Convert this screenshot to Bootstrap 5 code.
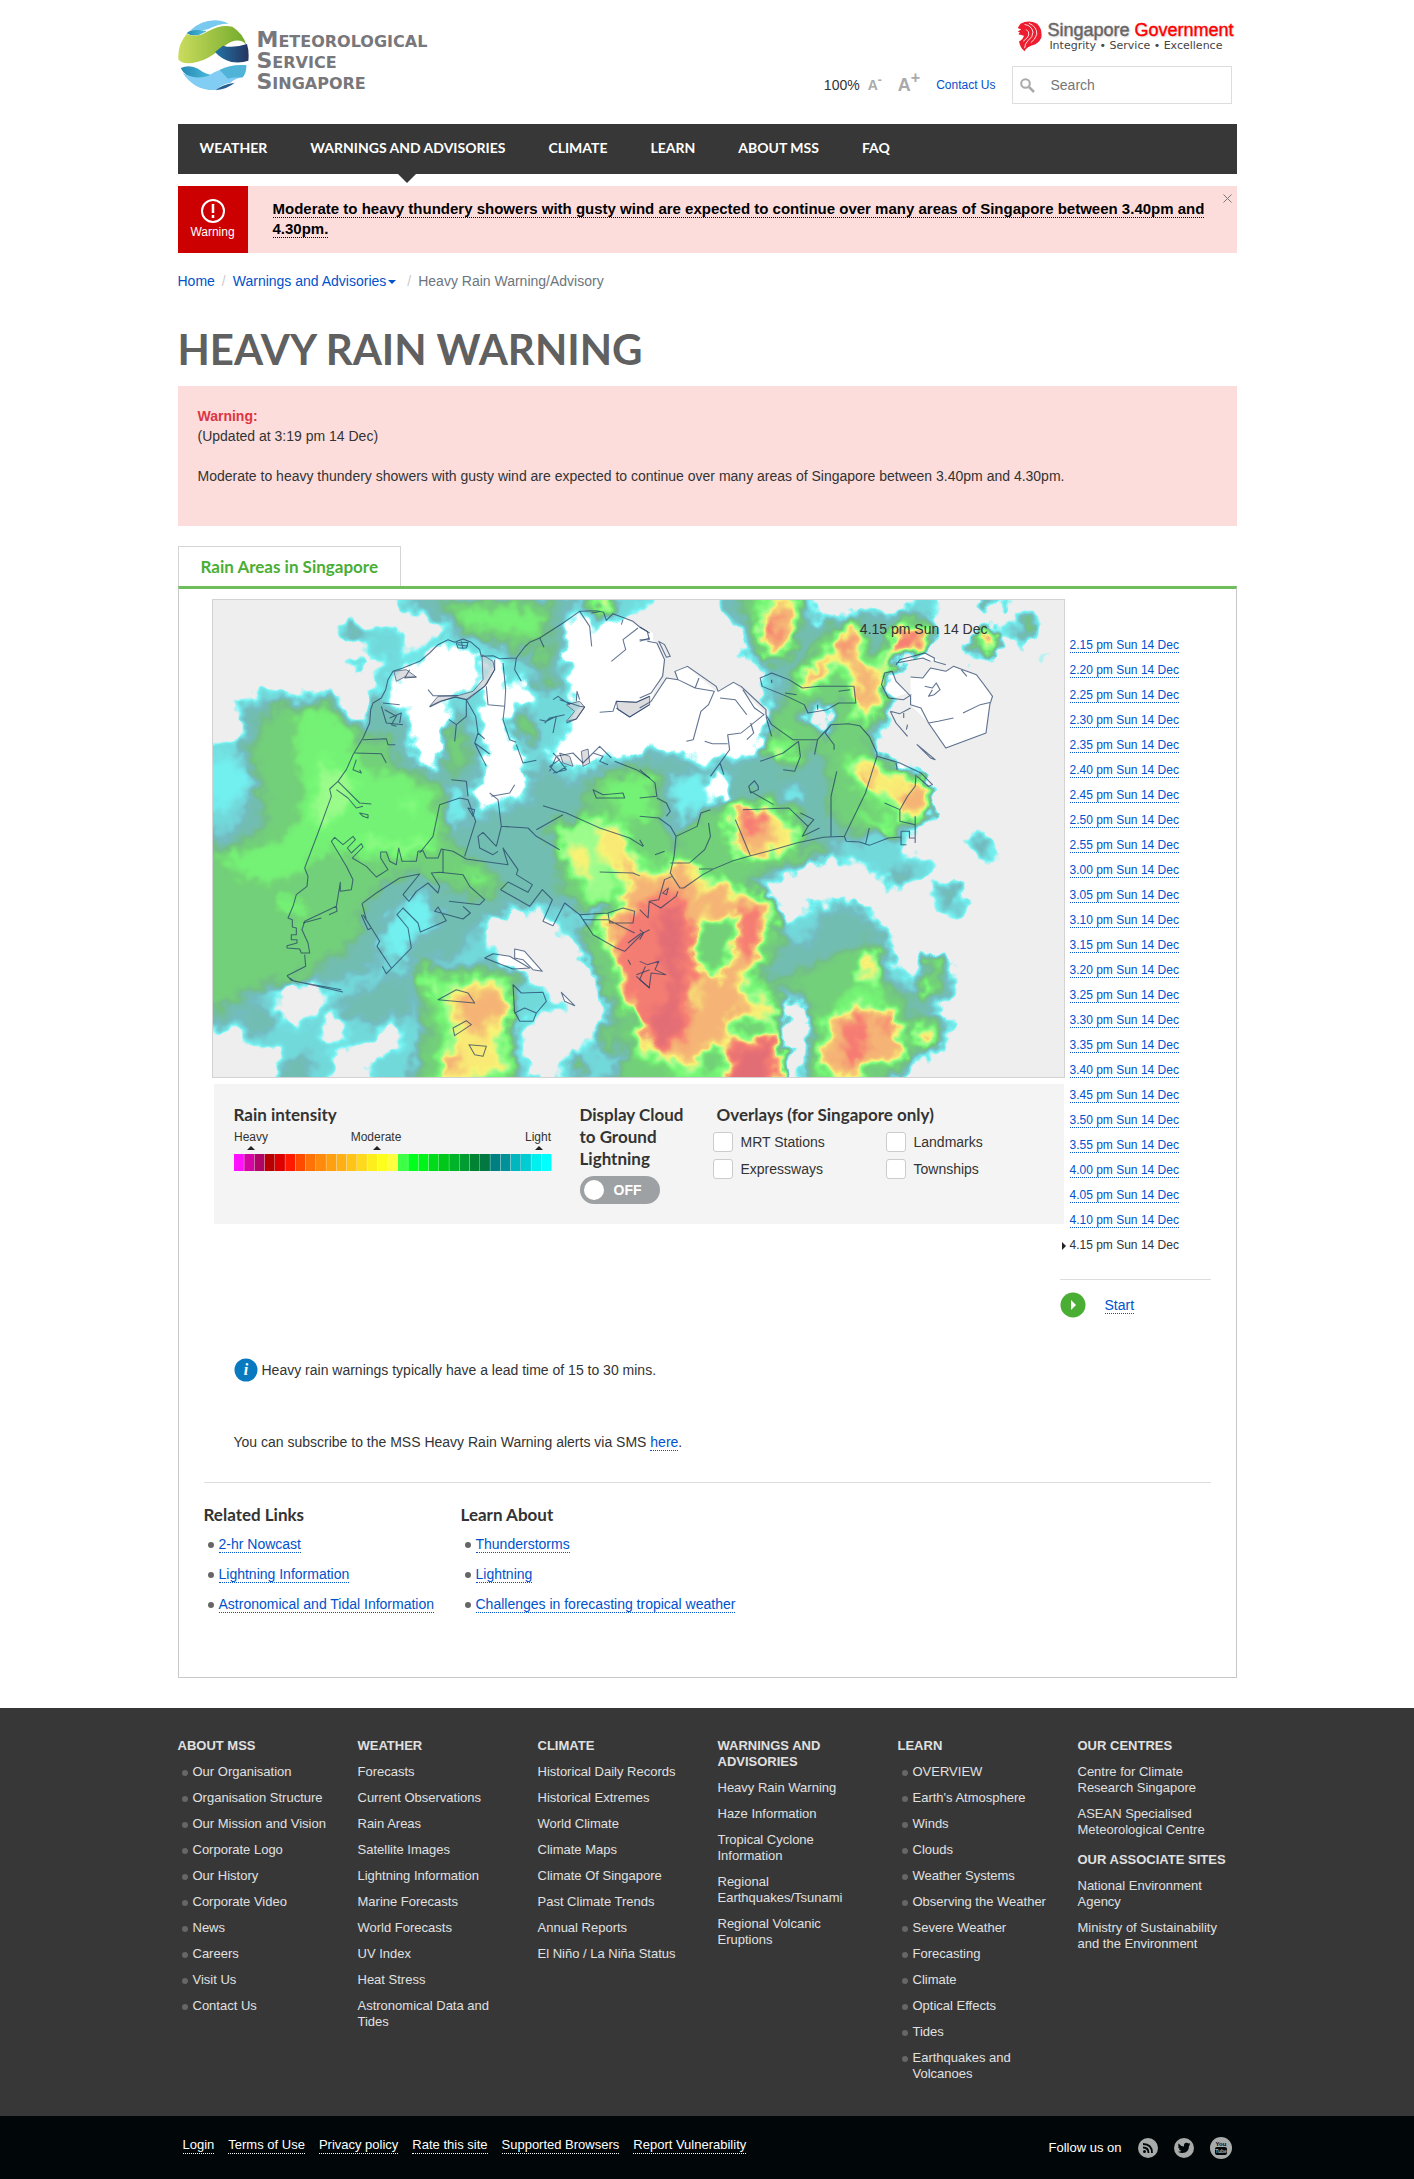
<!DOCTYPE html>
<html lang="en">
<head>
<meta charset="utf-8">
<meta name="viewport" content="width=device-width, initial-scale=1">
<title>Heavy Rain Warning | Meteorological Service Singapore</title>
<link href="https://cdn.jsdelivr.net/npm/bootstrap@5.3.0/dist/css/bootstrap.min.css" rel="stylesheet">
<style>
body{font-family:"Liberation Sans",Arial,sans-serif;font-size:14px;line-height:20px;color:#333;background:#fff}
a{color:#0052cc;text-decoration:none}
.page-wrap{max-width:1059px;margin:0 auto}
.head-font{font-family:Lato,sans-serif;font-weight:700}
.dotted{border-bottom:1px dotted currentColor}
.mast{height:124px}
.brand{margin-top:20px;gap:8px}
.brand-name{font:bold 16px/19px "DejaVu Sans",sans-serif;color:#77777c;padding-top:10px}
.brand-name b{font-size:22px;line-height:19px}
.gov{margin:20px 3px 0 0;gap:5px}
.gov-name{font-size:18px;line-height:20px;color:#666;-webkit-text-stroke:.4px;text-shadow:1px 1px 2px #ccc}
.gov-name span{color:#f00}
.gov-motto{font:11px/12px "DejaVu Sans",sans-serif;color:#444;padding-left:2px}
.tools{margin:14px 5px 0 0}
.contact{font-size:12px}
.size-btn{border:0;background:none;padding:0;color:#aaa;font-weight:700}
.size-s{font-size:14px}.size-l{font-size:18px}
.size-s sup{font-size:12px}.size-l sup{font-size:16px}
.search-box{width:220px;height:38px;border:1px solid #ddd;padding-left:7px}
.search-box input{border:0;outline:0;width:150px;margin-left:16px;padding:0;color:#333;background:none}
.search-box input::placeholder{color:#757575;opacity:1}
.main-nav{background:#373737;height:50px}
.main-nav .nav-link{color:#fff;font-size:14px;line-height:20px;padding:14px 21px 16px 22px;position:relative}
.main-nav .active::after{content:"";position:absolute;top:100%;left:50%;margin-left:-9px;border:9px solid transparent;border-top-color:#373737;border-bottom:0}
.alert-strip{background:#fcdddc;margin-top:12px;min-height:67px}
.alert-tag{background:#c00;color:#fff;width:70px;font-size:12px;line-height:16px;padding-top:12px}
.alert-text{padding:13px 10px 0 25px;font-size:15px;font-weight:700}
.alert-text a{color:#000}
.shut{border:0;background:none;padding:0;margin:8px 5px 0 0;width:9px;line-height:0}
.crumbs{margin:18px 0 0;gap:7px}
.crumbs .sep{color:#ccc}
.crumbs .caret{display:inline-block;border:4px solid transparent;border-top-color:#0052cc;border-bottom:0;vertical-align:2px;margin:0 4px 0 2px}
h1.title{font-size:42px;line-height:48px;color:#606060;margin:34px 0 13px}
.warn-box{background:#fcdddc;padding:20px 20px 40px;margin-bottom:20px}
.tab-head{display:inline-block;border:1px solid #d5d5d5;border-bottom:0;color:#4aae35;font-size:17px;line-height:40px;height:40px;padding:0 22px}
.panel{border:1px solid #c8c8c8;border-top:3px solid #6fbe5c;padding:10px 25px 0 33px;min-height:1092px}
.map{border:1px solid #d3d3d3;background:#eee}
.map svg{display:block;width:100%}
.map-time{position:absolute;right:76px;top:19px}
.legend-box{background:#f4f4f4;margin:6px 1px 0 2px;padding:20px;height:140px}
.scale-col{width:346px}
.switch-col{width:133px}
h2.sub{font-size:17px;line-height:22px;margin:0;color:#333}
.check-grid{display:grid;grid-template-columns:173px auto;row-gap:7px;margin-top:6px}
.check-grid label{margin-left:8px}
.check-grid .form-check-input{width:20px;height:20px;margin:0;border:1px solid #ccc;border-radius:3px;background-color:#fff}
.pill{background:#9da1a3;border-radius:14px;width:80px;height:28px;padding:4px;color:#fff;margin-top:6px;gap:10px}
.pill input{appearance:none;width:20px;height:20px;border-radius:50%;background:#fff;margin:0}
.side{width:151px;margin-left:-5px}
.times{font-size:12px;line-height:15px;padding:39px 0 0 10px;margin:0;list-style:none}
.times li{height:25px;position:relative}
.times .now::before{content:"";position:absolute;left:-8px;top:4px;border:4px solid transparent;border-left-color:#222;border-right:0}
.line{border-top:1px solid #ddd}
.play-row{padding-top:12px;gap:19px}
.note{margin-left:22px}
.note-info{margin-top:40px}
.note-sms{margin-top:50px}
.rel{margin:30px 0 0 -8px;padding-top:21px}
.rel-first{width:257px}
.dots{list-style:none;margin:0;padding:0}
.dots li{position:relative;padding-left:15px}
.dots li::before{content:"";position:absolute;left:4px;top:8px;width:6px;height:6px;border-radius:50%;background:#666}
.rel li{margin-bottom:10px}
.foot{background:#373737;color:#e0e0e0;font-size:13px;line-height:16px;margin-top:30px;padding:30px 0 0;min-height:408px}
.foot a{color:#e0e0e0}
.foot-cols{display:grid;grid-template-columns:repeat(6,1fr);margin-right:-21px}
.foot-cols section{padding-right:32px}
.foot-cols .wide{padding-right:20px}
.foot h3{font-size:13px;line-height:16px;font-weight:700;margin:0 0 10px}
.foot li{margin-bottom:10px}
.foot ul+h3{margin-top:14px}
.foot ul.tight li:last-child{margin-bottom:0}
.foot .dots li::before{top:6px}
.base{background:#010708;color:#fff;height:63px;font-size:13px;line-height:16px}
.base a{color:#fff}
.base-links{gap:14px;padding:0 0 5px 5px}
.base-social{padding-right:5px}
</style>
<script src="https://cdn.jsdelivr.net/npm/bootstrap@5.3.0/dist/js/bootstrap.bundle.min.js"></script>
</head>
<body>
<div class="page-wrap">
<header class="mast d-flex justify-content-between">
  <a href="#" class="brand d-flex align-items-start">
    <svg width="71" height="71" viewBox="0 0 213 213" aria-hidden="true">
      <defs>
        <linearGradient id="lgG"><stop offset="0" stop-color="#cbdc5e"/><stop offset="1" stop-color="#72aa2b"/></linearGradient>
        <linearGradient id="lgB"><stop offset="0" stop-color="#2274a8"/><stop offset="1" stop-color="#25345f"/></linearGradient>
        <linearGradient id="lgS"><stop offset="0" stop-color="#2588b4"/><stop offset="1" stop-color="#4fc0de"/></linearGradient>
      </defs>
      <path d="M38 30Q70 2 110 1Q135 2 152 11Q120 10 90 28Q60 34 38 30Z" fill="#78c9ef"/>
      <path d="M26 40Q34 28 62 30Q95 32 80 37Q50 55 26 40Z" fill="url(#lgS)"/>
      <path d="M26 42Q60 54 90 34Q130 12 163 20Q195 40 205 75Q190 55 160 65C120 85 100 125 30 130Q8 130 1 118Q-2 75 26 42Z" fill="url(#lgG)"/>
      <path d="M111 96L135 77Q165 86 207 72Q214 95 211 122Q190 130 160 126Q130 118 111 96Z" fill="url(#lgB)"/>
      <path d="M8 144Q35 132 60 146Q85 165 110 165Q80 180 50 175Q20 168 8 144Z" fill="url(#lgS)"/>
      <path d="M14 158Q50 180 90 168Q130 140 205 136Q206 158 194 172Q170 176 158 188Q130 192 115 210Q50 214 14 158Z" fill="#82cdf3"/>
      <path d="M125 150Q160 132 205 136Q204 160 194 172Q165 172 150 176Z" fill="#4fb4d8"/>
      <path d="M113 211Q128 195 170 188Q150 206 113 211Z" fill="#255f92"/>
    </svg>
    <span class="brand-name"><b>M</b>ETEOROLOGICAL<br><b>S</b>ERVICE<br><b>S</b>INGAPORE</span>
  </a>
  <div class="d-flex flex-column align-items-end">
    <a href="#" class="gov d-flex">
      <svg width="25" height="32" viewBox="0 0 72 90" aria-hidden="true"><path d="M2 22L10 10Q34-4 58 10Q74 26 70 50Q62 68 42 72Q26 78 22 89Q8 78 6 60Q16 56 20 44L4 40L8 34L2 32L12 26Z" fill="#ed1c2e"/><path d="M22 12Q42 14 46 34Q46 48 32 58Q22 68 22 80M34 8Q58 18 57 40Q52 56 40 64M26 26Q36 32 34 42Q30 52 18 60" fill="none" stroke="#fff" stroke-width="2.500"/></svg>
      <span><span class="gov-name d-block">Singapore <span>Government</span></span><span class="gov-motto d-block">Integrity • Service • Excellence</span></span>
    </a>
    <div class="tools d-flex align-items-center">
      <span>100%</span>
      <button class="size-btn size-s ms-2" aria-label="Smaller text">A<sup>-</sup></button>
      <button class="size-btn size-l ms-3 me-3" aria-label="Larger text">A<sup>+</sup></button>
      <a href="#" class="contact me-3">Contact Us</a>
      <form class="search-box d-flex align-items-center">
        <svg width="15" height="15" viewBox="0 0 15 15" aria-hidden="true"><circle cx="5.500" cy="5.500" r="4.300" fill="none" stroke="#aaa" stroke-width="2"/><path d="M9 9l5 5" stroke="#aaa" stroke-width="2.500"/></svg>
        <input type="text" placeholder="Search" aria-label="Search">
      </form>
    </div>
  </div>
</header>
<nav class="main-nav nav head-font">
  <a class="nav-link" href="#">WEATHER</a>
  <a class="nav-link active" href="#">WARNINGS AND ADVISORIES</a>
  <a class="nav-link" href="#">CLIMATE</a>
  <a class="nav-link" href="#">LEARN</a>
  <a class="nav-link" href="#">ABOUT MSS</a>
  <a class="nav-link" href="#">FAQ</a>
</nav>
<div class="alert-strip d-flex">
  <div class="alert-tag text-center flex-shrink-0">
    <svg width="26" height="26" viewBox="0 0 26 26" class="d-block mx-auto" aria-hidden="true"><circle cx="13" cy="13" r="11" fill="none" stroke="#fff" stroke-width="2"/><path d="M13 6v9M13 17v3" stroke="#fff" stroke-width="2.500"/></svg>
    Warning
  </div>
  <div class="alert-text flex-grow-1"><a href="#" class="dotted">Moderate to heavy thundery showers with gusty wind are expected to continue over many areas of Singapore between 3.40pm and 4.30pm.</a></div>
  <button class="shut align-self-start" aria-label="Close"><svg width="9" height="9" viewBox="0 0 9 9"><path d="M.5 .5l8 8M8.500 .5l-8 8" stroke="#777"/></svg></button>
</div>
<div class="crumbs d-flex" aria-label="breadcrumb">
  <a href="#">Home</a><span class="sep">/</span><a href="#">Warnings and Advisories<i class="caret"></i></a><span class="sep">/</span><span class="text-secondary">Heavy Rain Warning/Advisory</span>
</div>
<h1 class="title head-font">HEAVY RAIN WARNING</h1>
<div class="warn-box">
  <strong class="text-danger">Warning:</strong><br>(Updated at 3:19 pm 14 Dec)<br><br>Moderate to heavy thundery showers with gusty wind are expected to continue over many areas of Singapore between 3.40pm and 4.30pm.
</div>
<div class="d-flex"><a href="#" class="tab-head head-font">Rain Areas in Singapore</a></div>
<main class="panel">
  <div class="d-flex">
    <div class="flex-grow-1">
      <div class="map position-relative">
        <svg viewBox="40 31 2553 1431" role="img" aria-label="Rain areas over Singapore">
          <defs>
            <filter id="rain" filterUnits="userSpaceOnUse" x="-100" y="-100" width="2850" height="1700" color-interpolation-filters="sRGB">
              <feGaussianBlur in="SourceGraphic" stdDeviation="12" result="soft"/>
              <feTurbulence type="fractalNoise" baseFrequency="0.022" numOctaves="2" seed="7" result="noise"/>
              <feDisplacementMap in="soft" in2="noise" scale="70" xChannelSelector="R" yChannelSelector="G" result="rough"/>
              <feColorMatrix in="rough" values="1 0 0 0 0  1 0 0 0 0  1 0 0 0 0  22 0 0 0 -1.3" result="lev"/>
              <feComponentTransfer>
                <feFuncR type="table" tableValues=".45 .45 .45 .45 .45 .46 .63 .98 .96 .97 .89"/>
                <feFuncG type="table" tableValues=".96 .96 .74 .75 .84 .97 .99 .95 .72 .50 .43"/>
                <feFuncB type="table" tableValues=".96 .96 .76 .53 .46 .46 .56 .46 .46 .45 .46"/>
              </feComponentTransfer>
            </filter>
          </defs>
          <rect width="2700" height="1600" fill="#eee"/>
          <g fill="#fff">
            <path d="M745 150L700 180L660 215L610 235L580 245L560 290L515 345L515 400L465 490L410 590L390 600L315 835L325 885L290 915L265 985L262 1070L330 1090L315 995L410 960L458 870L395 755L530 862L800 808L925 825L955 840L998 885L985 908L925 877L903 900L990 950L1028 900L1058 930L1030 995L1060 1008L1095 940L1140 975L1180 1035L1275 1085L1360 1000V130L1240 70L1140 65L1020 145L950 205L870 200L835 175L790 148Z"/>
            <path d="M487 942L600 865L660 853L790 855L855 930L812 970L662 1027L610 955L635 1075L560 1152L530 1070Z"/>
            <path d="M945 1078L975 1085L1028 1145L1000 1140L945 1105ZM855 1105L880 1092L930 1100L990 1135L940 1138ZM940 1185L965 1210L1030 1208L1040 1235L1010 1270L1000 1295L960 1295L942 1260ZM1085 1208L1125 1248L1095 1235Z"/>
          </g>
          <g fill="#fff" transform="translate(1320 0) scale(1.148 1)">
            <path d="M0 120L45 160L65 210L60 250L30 330L70 265L100 270L95 240L125 232L200 305L245 278L330 375L345 420L400 450L465 450L500 405L575 410L620 490L680 520L760 590L720 720L683 742L600 767L540 755L410 760L285 800L115 895L55 955L0 1000Z"/>
            <path d="M315 265L345 250L390 270L425 295L470 290L560 290L565 340L520 340L490 360L440 370L385 320L320 290ZM708 262L740 265L760 235L800 245L820 230L880 255L920 320L905 430L800 475L755 400L708 345ZM632 260L660 245L670 275L700 310L650 330ZM670 215L745 190L800 225L740 205Z"/>
          </g>
          <g filter="url(#rain)">
            <rect x="-100" y="-100" width="2850" height="1700" fill="#000"/>
            <!-- light rain, west -->
            <g fill="#262626">
              <path d="M0 460H110L135 440V400L112 385V330L165 325L175 292H235L260 315L330 300H400L440 370L500 395L515 330L520 265L560 220L500 195L490 160L430 150L420 120L450 60L475 95L520 115L560 105L620 130L620 185L590 215L720 120L715 90L650 80L590 50L595 0H1360V1500H-10Z"/>
            </g>
            <!-- light rain, east -->
            <g fill="#262626" transform="translate(1320 0) scale(1.148 1)">
              <path d="M-10 0H15L-10 60ZM205 0L210 60L240 100L270 120V210L310 235L330 330L330 500L240 500L150 510L60 470L-10 460V1500H650L700 1440L770 1400L830 1320L770 1270L830 1210L825 1130L780 1090L735 1110L715 1170L670 1130L660 1020L600 980L620 950L540 935L450 940L380 1010L330 900L440 830L520 810L590 830L640 870L650 910L740 880L750 840L790 820L760 800L690 790L690 730L740 710L775 655L740 560L620 490L610 470L640 430L660 330L640 250L690 195L770 175L765 90L790 60L770 0H720L700 60L560 70L530 60L480 100L450 30V0ZM885 0L890 40L930 55L965 30V0ZM990 70L1040 65L1055 120L1010 175L970 160L950 130L920 210L860 220L855 180L885 110L940 120ZM835 750L890 720L915 760L950 800L930 840L860 780ZM760 880L830 870L860 960L820 990L765 970ZM1045 190L1075 200V220H1045ZM1020 1220L1055 1200L1030 1235Z"/>
            </g>
            <!-- teal fringe -->
            <g fill="#3a3a3a">
              <path d="M130 350L400 325L480 410L500 440L520 330L560 330L620 420L640 530L740 540L760 370L790 350L830 480L830 560L820 680L880 680L930 640L1010 640L980 560L1030 520L1120 580L1180 530L1360 500V900L1130 960L1040 940L950 950L820 1020L780 1100L620 1110L480 1150L420 1170L300 1180L200 1200L110 1300L-10 1310V720L90 740L170 600L150 510L110 470L130 420ZM610 20L720 90L780 140L850 150L960 180L1000 240L980 290L1020 300L1090 250L1100 60L1150 20ZM530 1170L640 1160L640 1300L600 1280L540 1300L440 1300L400 1250ZM250 1420L330 1390L330 1500H260ZM130 1260L210 1240L220 1320L170 1350ZM1190 1290L1270 1290V1400L1210 1400ZM440 90L490 110L490 160L430 150ZM460 200L490 210L480 240L455 235Z"/>
            </g>
            <g fill="#3a3a3a" transform="translate(1320 0) scale(1.148 1)">
              <path d="M-10 500L70 490L170 540L280 510L330 470L340 350L360 260L290 200L280 110L220 50L230 0H430L450 100L550 80L720 60L750 80L750 170L680 200L640 260L640 340L620 430L600 500L740 570L765 655L730 700L680 740L500 760L520 800L400 830L310 880L360 940L380 1050L440 1060L480 960L560 940L600 990L650 1050L650 1170L720 1210L760 1120L810 1110L810 1200L750 1270L810 1320L760 1370L690 1420L620 1500H440L440 1280L380 1220V1500H-10ZM655 850L700 820L710 880L660 890ZM780 890L820 890L840 940L800 960ZM870 745L910 740V775L880 780Z"/>
            </g>
            <!-- pockets of lighter rain over Jurong and the central catchment -->
            <g fill="#1c1c1c">
              <path d="M600 950L680 900L720 990L640 1060L560 1130L540 1030ZM740 600L790 590L790 700L750 720ZM0 500L110 500L150 590L80 660L0 640Z"/>
            </g>
            <g fill="#1c1c1c" transform="translate(1320 0) scale(1.148 1)">
              <path d="M80 560L180 560L240 600L160 660L90 700ZM380 590L430 600L420 640L380 630ZM60 690L90 720L40 740Z"/>
            </g>
            <!-- moderate rain -->
            <g fill="#5e5e5e">
              <path d="M210 350L380 340L450 410L500 450L560 450L600 540L710 560L740 640L740 740L820 820L900 860L880 930L760 900L640 850L560 880L480 970L470 1060L330 1150L260 1180L180 1190L60 1260L-10 1270V770L110 770L200 700L190 600L150 500ZM720 30H1060L1050 130L960 190L900 160L780 120ZM740 430L790 420L820 500L780 550L735 530ZM1010 180L1060 170L1050 230L1000 230ZM1030 260L1080 270L1070 310L1030 300ZM940 370L1010 390L1010 470L960 440ZM1200 550L1360 530V900L1130 960L1080 900L1090 780L1040 720L1140 680ZM640 1110L760 1140L880 1130L960 1170L930 1260L940 1380L950 1500H640L650 1400L680 1330ZM1130 1000L1220 1080L1290 1260L1330 1500L1210 1500L1290 1400L1220 1230ZM1200 1310L1250 1310L1250 1390L1210 1390ZM1120 1400L1160 1410V1450L1120 1450Z"/>
            </g>
            <g fill="#5e5e5e" transform="translate(1320 0) scale(1.148 1)">
              <path d="M240 0H420L420 90L380 220L320 210L300 110ZM470 150L540 90L580 130L600 200L650 170L680 110L740 90L760 160L690 190L640 240L640 330L600 430L610 500L750 580L760 650L720 690L560 730L500 680L490 540L470 460L400 540L320 500L340 400L380 330L410 250ZM-10 560L60 620L70 740L110 790L100 730L190 660L280 620L400 640L440 730L400 780L500 760L480 800L320 850L260 890L340 920L370 980L380 1060L320 1130L280 1170L380 1170L500 1100L620 1050L640 1180L700 1230L700 1430L600 1500H450L450 1320L420 1200L300 1190L370 1240L380 1500H-10ZM890 0L950 20V40L900 35ZM1000 90L1035 95L1030 140L990 140ZM870 150L920 110L940 170L890 205ZM730 1160L790 1110L800 1180L740 1230ZM690 1300L780 1290L790 1350L720 1400Z"/>
            </g>
            <!-- bright green -->
            <g fill="#7c7c7c">
              <path d="M300 360L370 350L460 430L480 520L600 560L700 600L710 740L720 790L640 800L500 810L380 780L300 850L200 880L100 850L60 790L190 780L290 700L310 600L280 480ZM770 60L960 50L1040 90L1000 150L900 120L800 110ZM250 900L330 960L310 1000L230 960ZM760 820L880 860L840 890ZM1200 560L1360 560V700L1200 680L1080 700L1050 720L1150 900L1180 930L1340 900L1320 800ZM660 1130L740 1170L900 1160L920 1230L930 1400L940 1500H690L730 1330Z"/>
              <path d="M370 500L430 560L470 600L380 720L340 690ZM600 640L640 630L630 670ZM480 740L560 760L700 760L680 780L500 770ZM1060 700L1190 690L1260 930L1170 940L1090 780Z" fill="#969696"/>
            </g>
            <g fill="#7c7c7c" transform="translate(1320 0) scale(1.148 1)">
              <path d="M300 10H420L410 140L360 210L320 200ZM440 290L530 100L570 110L610 220L640 200L650 150L730 90L765 110L760 175L680 195L640 250L630 380L590 420L560 380L530 250L490 230L470 280ZM530 500L620 500L750 590L760 660L720 700L680 690L560 600ZM560 660L690 700L660 730L570 700ZM230 640L330 640L410 700L410 780L250 810ZM330 440L400 440L400 500L330 500ZM110 800L170 850L340 930L360 1000L300 1140L360 1240L370 1350V1500H-10V830ZM480 1300L540 1200L620 1180L660 1280L690 1400L600 1400L560 1480H470ZM590 1080L620 1080L620 1160L580 1160ZM725 1200L770 1170L760 1200L730 1230Z"/>
            </g>
            <!-- yellow -->
            <g fill="#b6b6b6">
              <path d="M1190 690L1270 720L1320 840L1360 850V1300L1270 1260L1240 1100L1170 1010L1280 930L1260 840L1200 810ZM1105 750L1150 780L1185 860L1135 870ZM740 1200L810 1170H910L930 1240L935 1300L890 1350L915 1440L880 1450L720 1500H720L735 1400L770 1330L740 1290ZM665 1170L705 1190L700 1230ZM1170 20H1240V60H1180Z"/>
            </g>
            <g fill="#b6b6b6" transform="translate(1320 0) scale(1.148 1)">
              <path d="M320 45L415 30L410 110L380 200L335 210L320 140ZM420 310L435 230L500 190L530 100L560 95L580 210L620 250L640 210L650 140L720 90L765 150L725 185L675 195L650 270L630 350L575 415L560 270L530 220L490 240L470 290ZM545 560L570 505L600 510L640 560L730 560L750 600L770 660L700 700L680 650L620 610ZM225 665L330 645L405 710L405 775L310 805L250 795ZM345 475L385 475V505H350ZM625 710L665 710L650 735ZM-10 860L70 840L110 790L140 840L190 870L260 900L345 930L345 1000L300 1130L270 1200L365 1245L350 1290L375 1400L370 1500H225L215 1370L130 1450L40 1400L-10 1370ZM490 1290L600 1240L670 1265L700 1410L600 1430L540 1490L460 1430ZM715 1325L765 1320L760 1375L720 1375ZM580 1080L625 1080L625 1170L575 1170ZM870 155L920 110L935 170L885 195ZM745 1110L790 1100L770 1130ZM715 1210L765 1165L760 1195Z"/>
              <path d="M145 1000L250 980L245 1090L205 1160L150 1140ZM210 1290L330 1290L350 1340L240 1340ZM150 1370H215V1430L165 1440ZM-10 1410L60 1420L120 1500H-10Z" fill="#606060"/>
            </g>
            <!-- orange -->
            <g fill="#cecece">
              <path d="M1265 780L1315 860L1360 890V1270L1280 1240L1250 1070L1195 1010L1290 960L1280 850ZM760 1230L880 1195L930 1290L860 1290L840 1350L790 1300ZM720 1400L790 1375L780 1450H730Z"/>
            </g>
            <g fill="#cecece" transform="translate(1320 0) scale(1.148 1)">
              <path d="M325 60L410 45L395 120L365 160L370 195L335 190ZM425 280L450 215L500 190L470 260ZM520 180L540 110L565 120L565 200L620 270L600 370L565 310L560 240ZM645 165L710 110L755 155L680 185ZM680 620L740 570L750 650L690 680ZM240 670L310 655L355 740L310 800L250 770ZM-10 900L80 850L110 790L130 860L150 930L200 880L250 930L325 940L315 1090L250 1180L280 1250L200 1350L130 1420L50 1380L-10 1280ZM510 1270L600 1250L670 1290L685 1400L590 1410L540 1470L480 1420ZM235 1345L370 1345V1500H235ZM560 555L620 555L605 605ZM885 140L928 120L918 185ZM725 1330L755 1330V1365H728Z"/>
              <path d="M145 1010L250 980L240 1090L205 1160L150 1130Z" fill="#606060"/>
              <path d="M130 980L180 960L150 1060ZM120 1160L170 1190L150 1260L125 1240Z" fill="#b6b6b6"/>
            </g>
            <!-- heavy rain -->
            <g fill="#e9e9e9">
              <path d="M1290 970L1360 930V1230L1290 1230L1250 1090Z"/>
            </g>
            <g fill="#e9e9e9" transform="translate(1320 0) scale(1.148 1)">
              <path d="M323 85L362 95L350 150H325ZM640 160L700 110L745 150L660 185ZM520 165L550 125L545 190ZM265 665L325 660L320 730L270 720ZM-10 960L50 920L90 890L140 980L145 1150L115 1360L50 1385L-10 1270ZM260 960L325 950L305 1090L260 1100ZM540 1290L595 1275L585 1430L535 1440ZM230 1360L365 1345L350 1500H235ZM635 1290L675 1310L650 1340ZM895 140L925 135L915 175Z"/>
              <path d="M40 980L110 950V1150L95 1350L40 1370L30 1280L80 1220ZM245 1390L350 1360L330 1500H245Z" fill="#fff"/>
            </g>
            <!-- dry patches -->
            <g fill="#000">
              <path d="M590 260L730 160L830 200L835 290L770 285L735 350L715 525L645 525L635 360L580 330ZM860 215L910 215L915 300L960 270L1005 310L990 340L930 350L915 400L925 450L960 480L980 600L960 620L890 630L870 660L835 650L830 570L870 530L850 450L850 340L855 290ZM1110 90L1140 75L1180 150L1190 110L1310 80L1360 60V450L1320 500L1210 490L1180 540L1040 500L1110 440L1100 390L1150 350L1110 290L1130 230L1090 220ZM230 1210L280 1190L370 1200V1240L310 1300L240 1290ZM370 1320L400 1270L440 1310L430 1350H380ZM0 1345L60 1315H110L140 1370L240 1380L230 1500H0ZM390 1500L400 1400L500 1360L540 1320L600 1310L605 1370L560 1380L510 1420V1500ZM860 990L960 960L1030 970L1070 1020L1150 1100L1200 1170L1215 1280L1150 1370L1080 1410V1500H1015L970 1370V1320L1040 1260L1130 1270L1040 1210L950 1150L860 1060Z"/>
            </g>
            <g fill="#000" transform="translate(1320 0) scale(1.148 1)">
              <path d="M-10 60L210 40L270 200L310 240L325 360L300 450L240 490L150 510L80 460L-10 450ZM440 350L505 340L505 410L470 430L435 390ZM185 560L220 545L240 630L195 645ZM380 1230L435 1230L445 1320L405 1500H375Z"/>
            </g>
          </g>
          <!-- reservoirs -->
          <g fill="#cfcfd3" fill-opacity=".7" stroke="#6f7c96" stroke-width="3">
            <path d="M847 195L880 215L885 240L860 285L805 330L770 322L720 335L690 350L715 320L775 318L820 305L850 270ZM583 245L620 240L650 262L615 262L590 275ZM1100 345L1140 335L1155 352L1130 388L1100 395L1125 365ZM1250 335L1310 338L1350 320V345L1290 382L1255 360ZM1145 485L1165 478L1170 520L1150 530ZM1080 490L1110 500L1120 530L1090 520Z"/>
          </g>
          <!-- coastline and rivers -->
          <g fill="none" stroke="#1f3a63" stroke-opacity=".7" stroke-width="3.200" stroke-linejoin="round">
            <path d="M1350 130L1320 112L1300 95L1240 72L1220 92L1212 68L1190 63L1140 65L1090 100L1020 145L990 158L975 172L950 205L900 207L880 198L845 200L840 180L815 158L790 148L765 158L745 150L715 165L690 190L660 215L610 235L580 245L565 270L558 300L545 325L520 340L513 360L510 400L490 445L460 495L440 540L415 575L390 598L395 620L355 730L315 835L325 860L322 890L290 915L280 950L265 985L278 990V1012L290 1015V1035H275V1050H292V1060L262 1068V1075L300 1078L305 1090H330L325 1060L307 1020L315 995L410 950L412 965L388 975M410 950L422 878V905L455 900L460 870L440 830L395 755L405 743L430 765L460 740L467 750L443 775L455 790L485 762L490 772L458 805L500 830L530 862L565 840L543 805V787H560L570 815L590 825L597 775L607 815H650L655 785L670 783L680 805H715L725 778L760 785L800 808L870 818L925 825L910 775L955 840L950 855L998 885L985 908L925 877L903 900L990 950L1028 900L1058 930L1030 995L1060 1008L1095 940L1140 975L1180 1035L1250 1075L1275 1085L1330 1030L1350 1020"/>
            <path d="M487 942L530 910L600 865L660 853L610 915L628 935L650 905L685 880L715 910L720 890L695 850L720 848L790 855L810 890L855 930L840 945L748 935M790 950L812 970L790 988L705 965L715 952L740 993L662 1027L655 1000L610 955L592 975L625 1015L635 1075L560 1152L548 1130M575 1135L532 1070L540 1055L500 990L487 942M485 975L505 1020L515 1015L490 975"/>
            <path d="M262 1158L318 1130L315 1095M262 1158L275 1172L430 1207M270 1165L285 1175L425 1200M310 1000L365 985M490 450L560 447L565 465H587M465 490L545 492L560 520M415 575L480 640L515 643M410 600L445 625L470 655L490 650M470 510L460 540L485 550L480 540M545 350L560 400L610 405M550 340L600 345M570 385L605 370L600 400M555 360L590 380L575 405L590 410M480 670L505 675V685L490 680Z"/>
            <path d="M885 210V240L855 290L800 330L765 322L725 335L690 352M685 300L700 318L775 318M800 330L828 380L835 430L825 460L860 530M800 330V380L770 405L765 455M770 405L748 390M835 430L855 448M825 460L870 493M910 220L918 300L915 350L865 345L860 290M915 350L910 390L930 450L950 458M950 205L945 240L965 275M1020 145L1033 173M1140 65L1170 110L1176 170M1175 70L1200 66M1315 115L1270 150L1278 180L1235 215M1200 368L1240 365L1250 335L1310 338L1350 320M1250 355L1290 382L1350 345M1270 90L1265 105M950 465L970 520L1010 512M1070 380L1040 395L1020 390M1070 380L1060 430M1095 375L1050 385L1035 400M1110 345L1075 320L1060 330M1130 335L1132 305L1140 330M1080 330L1140 350L1155 352L1130 388L1100 400M1070 500L1120 490L1150 520L1200 470L1235 505M1060 490L1080 510L1050 530L1070 550L1100 530M1180 490L1210 500L1200 515L1225 525M1060 550L1100 540L1070 500L1050 545M1245 515L1310 540L1350 565M1180 600L1210 615L1270 610L1275 625L1190 625ZM1030 648L1100 670L1200 715L1290 745L1330 770M1090 675L1010 720M870 610L895 630L905 710L890 770M875 620L930 610L945 585M905 710L985 715L1010 740L1080 780M890 770L850 728L835 740L840 775L880 795L895 785M780 625L720 645L700 740L660 790M780 625L805 630L828 695L795 800M755 570L800 575L805 620M805 655L825 660L820 680ZM730 780V850M1200 847L1300 850L1320 858M1225 970L1270 955L1305 965L1300 1000L1230 1000ZM1140 975L1225 970M1150 990L1225 990L1305 1030M1285 1060L1325 1030M945 1078L975 1085L1028 1145L1000 1140L970 1110L945 1105ZM855 1105L880 1092L930 1100L990 1135L940 1138ZM940 1185L965 1210L1030 1208L1040 1235L1010 1270L975 1255L945 1270ZM1010 1270L1000 1295L960 1295L942 1260M1085 1208L1125 1248L1095 1235ZM715 1230L770 1200L805 1210L825 1240ZM760 1315L800 1293L815 1305L765 1338ZM808 1365L860 1370L850 1400L825 1395ZM770 160L805 158L800 175H775ZM775 165L805 170M785 155L790 178M630 240L615 265L650 262M1310 1155L1350 1140M1310 1160L1350 1195M1285 1110L1293 1125M1320 155L1350 145"/>
          </g>
          <g fill="none" stroke="#1f3a63" stroke-opacity=".7" stroke-width="3" stroke-linejoin="round" transform="translate(1320 0) scale(1.148 1)">
            <path d="M0 112L20 125L25 150L0 150M20 155L45 160L65 210L60 260L30 310L0 325M0 355L30 335L70 265L100 270L92 245L125 230L200 290L205 305L245 278L265 290L330 360V375L345 405L400 450H465L500 405L545 402L575 408L600 440L620 490L620 500L680 520L735 550L765 585L755 590L725 560M50 155L65 165L80 200L70 203ZM155 265L145 295M100 270L145 295L195 305L180 345L160 365L140 450L122 455M265 290L325 355M270 300L300 355L325 375L265 430L230 435L235 480L210 520L185 560M210 520L220 555M290 400L298 430L280 450M170 455L190 462H230M210 325L250 330L280 375M330 380L345 440M415 455L420 500L405 545L375 540M415 455L375 490L315 515M500 405L485 430L508 465V480M465 450L457 495M620 500L590 610L535 740M515 545L500 620V740M722 555L720 590L700 620L680 660L680 695L720 705V690M720 680V760M683 725V765H697M683 725H705V745H720M683 742L650 745L600 767L575 757L540 755L535 740L480 743L410 760L340 783L285 800L240 815L195 837L155 838M195 837L165 855L115 895L105 895L80 850L90 800L95 740L80 710L50 685L0 680M0 540L40 580L45 620L0 625M45 625L70 640L80 665L70 680M95 740L150 710L160 670L185 660M180 700L185 740L170 780L130 820L80 820M250 690L290 800M270 660L390 655L440 710L455 690L420 670M310 600L290 610L285 590L300 573L310 590ZM290 605L350 645M440 710L425 740L470 715M640 640L680 660M600 715L590 765M670 520L673 540M105 895L85 860L65 870L50 930L25 935M100 905L95 920L55 955L25 935L22 985L0 960M60 910L75 895L70 915ZM40 795L65 785M0 750L10 770M0 1115L20 1125L50 1115L40 1140L68 1155L30 1150L25 1195L0 1170L15 1130M0 1020L10 1030L0 1050"/>
            <path d="M315 265L345 250L390 270L425 295L470 290L560 290L565 340L520 340L490 360L440 370L430 345L385 320L320 290ZM380 310L410 315M520 305L550 300M708 262L740 265L760 235L800 245L820 230L880 255L900 285L922 320L915 345L905 430L800 475L755 400L735 355L708 345V320L700 310L670 275L660 245L640 250L632 285L650 325L690 330L710 315M670 225L680 210L745 190L770 205V215L800 225M670 220L740 205L760 215M655 365L680 372L708 355M655 365L670 400L700 440M690 370V385M700 405L697 420M725 465L772 510L760 505ZM755 400L780 395L820 385M845 370L890 345L918 338M745 290L765 295L775 280L785 300L770 315L755 320L765 300M840 240L855 260M345 270V280M465 345V360"/>
          </g>
        </svg>
        <div class="map-time">4.15 pm Sun 14 Dec</div>
      </div>
      <div class="legend-box d-flex">
        <div class="scale-col flex-shrink-0">
          <h2 class="sub head-font">Rain intensity</h2>
          <svg class="d-block" width="318" height="50" viewBox="0 0 318 50" font-size="12" fill="#333" id="scale" role="img" aria-label="Rain intensity scale">
            <text x="0" y="15">Heavy</text><text x="142" y="15" text-anchor="middle">Moderate</text><text x="317" y="15" text-anchor="end">Light</text>
            <path d="M13 24l4-4l4 4zM139 24l4-4l4 4zM301 24l4-4l4 4z" fill="#222"/>
          </svg>
        </div>
        <div class="switch-col flex-shrink-0">
          <h2 class="sub head-font pe-4">Display Cloud to&nbsp;Ground Lightning</h2>
          <label class="pill d-flex align-items-center"><input type="checkbox" role="switch"><b>OFF</b></label>
        </div>
        <div>
          <h2 class="sub head-font ps-1">Overlays (for Singapore only)</h2>
          <div class="check-grid">
            <div class="d-flex"><input class="form-check-input" type="checkbox" id="mrt"><label for="mrt">MRT Stations</label></div>
            <div class="d-flex"><input class="form-check-input" type="checkbox" id="lmk"><label for="lmk">Landmarks</label></div>
            <div class="d-flex"><input class="form-check-input" type="checkbox" id="exp"><label for="exp">Expressways</label></div>
            <div class="d-flex"><input class="form-check-input" type="checkbox" id="twn"><label for="twn">Townships</label></div>
          </div>
        </div>
      </div>
    </div>
    <div class="side flex-shrink-0">
      <ul class="times">
        <li><a href="#" class="dotted">2.15 pm Sun 14 Dec</a></li><li><a href="#" class="dotted">2.20 pm Sun 14 Dec</a></li><li><a href="#" class="dotted">2.25 pm Sun 14 Dec</a></li><li><a href="#" class="dotted">2.30 pm Sun 14 Dec</a></li><li><a href="#" class="dotted">2.35 pm Sun 14 Dec</a></li><li><a href="#" class="dotted">2.40 pm Sun 14 Dec</a></li><li><a href="#" class="dotted">2.45 pm Sun 14 Dec</a></li><li><a href="#" class="dotted">2.50 pm Sun 14 Dec</a></li><li><a href="#" class="dotted">2.55 pm Sun 14 Dec</a></li><li><a href="#" class="dotted">3.00 pm Sun 14 Dec</a></li><li><a href="#" class="dotted">3.05 pm Sun 14 Dec</a></li><li><a href="#" class="dotted">3.10 pm Sun 14 Dec</a></li><li><a href="#" class="dotted">3.15 pm Sun 14 Dec</a></li><li><a href="#" class="dotted">3.20 pm Sun 14 Dec</a></li><li><a href="#" class="dotted">3.25 pm Sun 14 Dec</a></li><li><a href="#" class="dotted">3.30 pm Sun 14 Dec</a></li><li><a href="#" class="dotted">3.35 pm Sun 14 Dec</a></li><li><a href="#" class="dotted">3.40 pm Sun 14 Dec</a></li><li><a href="#" class="dotted">3.45 pm Sun 14 Dec</a></li><li><a href="#" class="dotted">3.50 pm Sun 14 Dec</a></li><li><a href="#" class="dotted">3.55 pm Sun 14 Dec</a></li><li><a href="#" class="dotted">4.00 pm Sun 14 Dec</a></li><li><a href="#" class="dotted">4.05 pm Sun 14 Dec</a></li><li><a href="#" class="dotted">4.10 pm Sun 14 Dec</a></li><li class="now">4.15 pm Sun 14 Dec</li>
      </ul>
      <div class="play-row line d-flex align-items-center mt-3">
        <svg width="26" height="26" viewBox="0 0 26 26" aria-hidden="true"><circle cx="13" cy="13" r="12.500" fill="#4aae35"/><path d="M11 8l5 5l-5 5z" fill="#fff"/></svg>
        <span><a href="#" class="dotted">Start</a></span>
      </div>
    </div>
  </div>
  <div class="note note-info d-flex align-items-center gap-1">
    <svg width="24" height="24" viewBox="0 0 24 24" aria-hidden="true"><circle cx="12" cy="12" r="11.500" fill="#0a7ac0"/><text x="12" y="17" text-anchor="middle" font-family="Liberation Serif, serif" font-size="16" font-weight="700" font-style="italic" fill="#fff">i</text></svg>
    <span>Heavy rain warnings typically have a lead time of 15 to 30 mins.</span>
  </div>
  <p class="note note-sms mb-0">You can subscribe to the MSS Heavy Rain Warning alerts via SMS <a href="#" class="dotted">here</a>.</p>
  <div class="rel line d-flex">
    <section class="rel-first"><h2 class="sub head-font mb-2">Related Links</h2>
      <ul class="dots"><li><a href="#" class="dotted">2-hr Nowcast</a></li><li><a href="#" class="dotted">Lightning Information</a></li><li><a href="#" class="dotted">Astronomical and Tidal Information</a></li></ul></section>
    <section><h2 class="sub head-font mb-2">Learn About</h2>
      <ul class="dots"><li><a href="#" class="dotted">Thunderstorms</a></li><li><a href="#" class="dotted">Lightning</a></li><li><a href="#" class="dotted">Challenges in forecasting tropical weather</a></li></ul></section>
  </div>
</main>
</div>
<footer>
  <div class="foot"><div class="page-wrap"><div class="foot-cols">
    <section class="wide"><h3>ABOUT MSS</h3><ul class="dots"><li><a href="#">Our Organisation</a></li><li><a href="#">Organisation Structure</a></li><li><a href="#">Our Mission and Vision</a></li><li><a href="#">Corporate Logo</a></li><li><a href="#">Our History</a></li><li><a href="#">Corporate Video</a></li><li><a href="#">News</a></li><li><a href="#">Careers</a></li><li><a href="#">Visit Us</a></li><li><a href="#">Contact Us</a></li></ul></section>
    <section><h3>WEATHER</h3><ul class="list-unstyled"><li><a href="#">Forecasts</a></li><li><a href="#">Current Observations</a></li><li><a href="#">Rain Areas</a></li><li><a href="#">Satellite Images</a></li><li><a href="#">Lightning Information</a></li><li><a href="#">Marine Forecasts</a></li><li><a href="#">World Forecasts</a></li><li><a href="#">UV Index</a></li><li><a href="#">Heat Stress</a></li><li><a href="#">Astronomical Data and Tides</a></li></ul></section>
    <section><h3>CLIMATE</h3><ul class="list-unstyled"><li><a href="#">Historical Daily Records</a></li><li><a href="#">Historical Extremes</a></li><li><a href="#">World Climate</a></li><li><a href="#">Climate Maps</a></li><li><a href="#">Climate Of Singapore</a></li><li><a href="#">Past Climate Trends</a></li><li><a href="#">Annual Reports</a></li><li><a href="#">El Niño / La Niña Status</a></li></ul></section>
    <section><h3>WARNINGS AND ADVISORIES</h3><ul class="list-unstyled"><li><a href="#">Heavy Rain Warning</a></li><li><a href="#">Haze Information</a></li><li><a href="#">Tropical Cyclone Information</a></li><li><a href="#">Regional Earthquakes/Tsunami</a></li><li><a href="#">Regional Volcanic Eruptions</a></li></ul></section>
    <section class="wide"><h3>LEARN</h3><ul class="dots"><li><a href="#">OVERVIEW</a></li><li><a href="#">Earth's Atmosphere</a></li><li><a href="#">Winds</a></li><li><a href="#">Clouds</a></li><li><a href="#">Weather Systems</a></li><li><a href="#">Observing the Weather</a></li><li><a href="#">Severe Weather</a></li><li><a href="#">Forecasting</a></li><li><a href="#">Climate</a></li><li><a href="#">Optical Effects</a></li><li><a href="#">Tides</a></li><li><a href="#">Earthquakes and<br>Volcanoes</a></li></ul></section>
    <section class="wide"><h3>OUR CENTRES</h3><ul class="tight list-unstyled mb-0"><li><a href="#">Centre for Climate<br>Research Singapore</a></li><li><a href="#">ASEAN Specialised Meteorological Centre</a></li></ul>
      <h3 class="text-nowrap">OUR ASSOCIATE SITES</h3><ul class="list-unstyled"><li><a href="#">National Environment Agency</a></li><li><a href="#">Ministry of Sustainability and the Environment</a></li></ul></section>
  </div></div></div>
  <div class="base"><div class="page-wrap h-100 d-flex justify-content-between align-items-center">
    <div class="base-links d-flex"><a href="#" class="dotted">Login</a><a href="#" class="dotted">Terms of Use</a><a href="#" class="dotted">Privacy policy</a><a href="#" class="dotted">Rate this site</a><a href="#" class="dotted">Supported Browsers</a><a href="#" class="dotted">Report Vulnerability</a></div>
    <div class="base-social d-flex align-items-center gap-3"><span>Follow us on</span>
      <a href="#" aria-label="RSS"><svg width="20" height="20" viewBox="0 0 20 20"><circle cx="10" cy="10" r="10" fill="#a9abab"/><circle cx="6.500" cy="13.500" r="1.500" fill="#010708"/><path d="M5 9.500q5.500 0 5.500 5.500M5 6q9 0 9 9" fill="none" stroke="#010708" stroke-width="1.800"/></svg></a>
      <a href="#" aria-label="Twitter"><svg width="20" height="20" viewBox="0 0 20 20"><circle cx="10" cy="10" r="10" fill="#a9abab"/><path d="M4.500 5.500q2.500 3 5.500 3q-.5-3.500 2.500-3.700q1.300 0 2 .8l1.700-.5l-1 1.500l1.200-.2l-1.400 1.500q0 6.500-6.500 7.100q-2.500 0-4.500-1.200q2.500 0 3.500-1.100q-2-.2-2.500-1.700h1q-2-.8-2-2.600l1 .3q-1.500-1.500-.5-3.200z" fill="#010708"/></svg></a>
      <a href="#" aria-label="YouTube"><svg width="22" height="22" viewBox="0 0 22 22"><circle cx="11" cy="11" r="11" fill="#a9abab"/><rect x="5" y="10" width="12" height="8" rx="2" fill="#010708"/><text x="11" y="9" text-anchor="middle" font-size="6" font-weight="700" fill="#010708">You</text><text x="11" y="16" text-anchor="middle" font-size="5" font-weight="700" fill="#a9abab">Tube</text></svg></a>
    </div>
  </div></div>
</footer>
<script>
const hues='ff10ff d505a5 b00566 b80000 dd0000 ff1a00 ff4a00 ff7208 ff8a0c ffa010 ffb014 ffc415 ffd91b ffee1e ffff1e ffff40 3cff46 00ff1a 00f41a 00dc1a 00c81a 00b42a 009c32 008434 007840 008080 009298 00b6bf 00ccd2 00f0f0 00ffff'.split(' ');
const scale=document.getElementById('scale');
hues.forEach((c,i)=>{const r=document.createElementNS('http://www.w3.org/2000/svg','rect');r.setAttribute('x',i*10.25);r.setAttribute('y',28);r.setAttribute('width',9.9);r.setAttribute('height',17);r.setAttribute('fill','#'+c);scale.appendChild(r)});
</script>
</body>
</html>
